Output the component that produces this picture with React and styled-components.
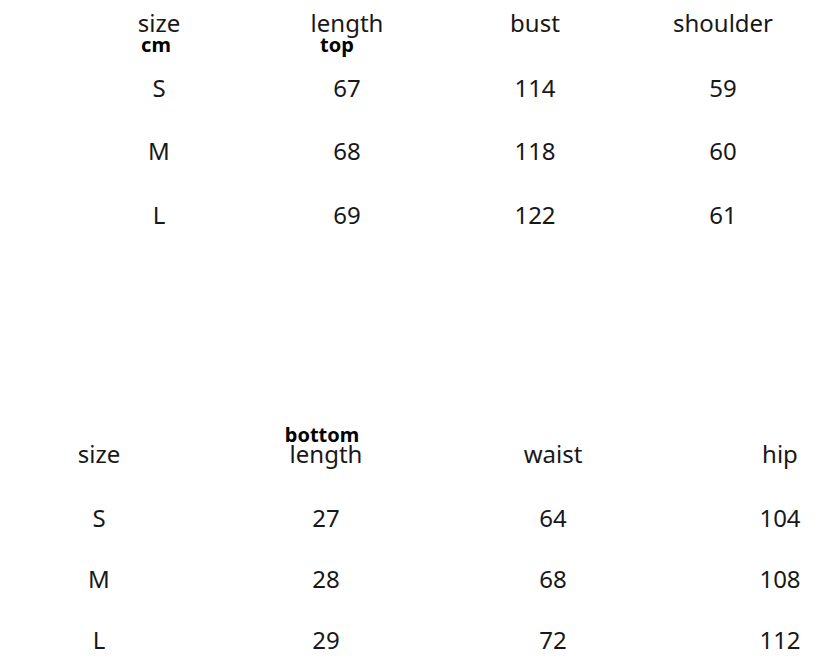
import React from "react";
import styled, { createGlobalStyle } from "styled-components";

const Global = createGlobalStyle`
  html, body { margin: 0; padding: 0; background: #fff; }
  body { width: 826px; height: 665px; overflow: hidden; font-family: "Noto Sans", "Open Sans", sans-serif; }
`;

const Page = styled.div`
  width: 826px;
  height: 665px;
  background: #fff;
  display: flex;
  flex-direction: column;
`;

const Section = styled.section`
  display: grid;
  grid-template-columns: repeat(4, ${(p) => p.$col}px);
  column-gap: ${(p) => p.$gap}px;
  padding-left: ${(p) => p.$left}px;
  margin-top: ${(p) => p.$top}px;
  grid-template-rows: ${(p) => p.$head}px;
  grid-auto-rows: ${(p) => p.$row}px;
`;

const HeadCell = styled.div`
  display: flex;
  flex-direction: column;
  align-items: center;
  justify-content: flex-start;
  padding-top: ${(p) => p.$pad || 0}px;
`;

const Label = styled.span`
  font-size: 24px;
  line-height: 22px;
  color: #181818;
  white-space: nowrap;
`;

const SubLabel = styled.span`
  font-size: 20px;
  line-height: ${(p) => p.$lh}px;
  font-weight: 700;
  color: #000;
  white-space: nowrap;
  margin-top: ${(p) => p.$mt || 0}px;
  margin-right: ${(p) => (p.$shift || 0) * 2}px;
`;

const Cell = styled.div`
  display: flex;
  align-items: center;
  justify-content: center;
  font-size: 24px;
  line-height: 24px;
  color: #181818;
`;

const top = {
  headers: [
    { label: "size", below: "cm", shift: 3 },
    { label: "length", below: "top", shift: 10 },
    { label: "bust" },
    { label: "shoulder" },
  ],
  rows: [
    ["S", "67", "114", "59"],
    ["M", "68", "118", "60"],
    ["L", "69", "122", "61"],
  ],
};

const bottom = {
  headers: [
    { label: "size", pad: 16 },
    { label: "length", above: "bottom", shift: 4 },
    { label: "waist", pad: 16 },
    { label: "hip", pad: 16 },
  ],
  rows: [
    ["S", "27", "64", "104"],
    ["M", "28", "68", "108"],
    ["L", "29", "72", "112"],
  ],
};

function SizeTable({ data, layout }) {
  return (
    <Section {...layout}>
      {data.headers.map((h) => (
        <HeadCell key={h.label} $pad={h.pad}>
          {h.above && (
            <SubLabel $lh={16} $shift={h.shift}>
              {h.above}
            </SubLabel>
          )}
          <Label>{h.label}</Label>
          {h.below && (
            <SubLabel $lh={18} $mt={1.5} $shift={h.shift}>
              {h.below}
            </SubLabel>
          )}
        </HeadCell>
      ))}
      {data.rows.map((r) => r.map((v, i) => <Cell key={r[0] + i}>{v}</Cell>))}
    </Section>
  );
}

export default function App() {
  return (
    <>
      <Global />
      <Page>
        <SizeTable
          data={top}
          layout={{ $col: 120, $gap: 68, $left: 99, $top: 12, $head: 44, $row: 63.5 }}
        />
        <SizeTable
          data={bottom}
          layout={{ $col: 90, $gap: 137, $left: 54, $top: 180.5, $head: 60, $row: 61 }}
        />
      </Page>
    </>
  );
}
